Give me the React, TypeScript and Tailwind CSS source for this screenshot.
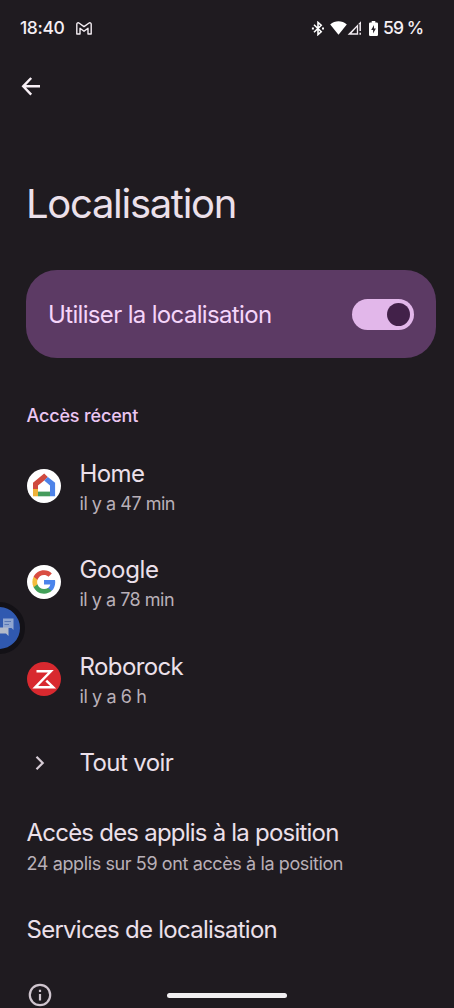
import React from 'react';

interface AppRowProps {
    icon: React.ReactNode;
    name: string;
    nameClass: string;
    time: string;
    timeClass: string;
}

const BackIcon = () => (
    <svg className="h-[20px] w-[20px]" viewBox="0 0 20 20" fill="none" stroke="#f8f0f6" strokeWidth="2.4">
        <path d="M19 10.3H2.5M10.2 2 2.2 10.3l8 8.3" />
    </svg>
);

const GmailIcon = () => (
    <svg className="h-[13px] w-[16px]" viewBox="0 0 16 13" fill="none" stroke="#f3edf2" strokeWidth="1.4" strokeLinejoin="round">
        <path d="M.8 12V2.2C.8.8 2.2.4 3.300 1.200L8 4.600l4.700-3.400c1.100-.8 2.500-.4 2.500 1V12h-3.200V6.300L8 9.200 4 6.300V12z" />
    </svg>
);

const BluetoothIcon = () => (
    <svg className="h-[15px] w-[14px]" viewBox="0 0 14 15" fill="none" stroke="#fff" strokeWidth="1.6">
        <path d="m3 3.8 7.2 7L7 13.6V1.4l3.2 2.8L3 11.2" />
        <path d="M.9 7.5h2M11 7.5h2" strokeWidth="1.8" />
    </svg>
);

const WifiIcon = () => (
    <svg className="h-[14px] w-[17px]" viewBox="0 0 17 14" fill="#fff">
        <path d="M8.5 13.8.2 3.4C5-.7 12-.7 16.8 3.4z" />
    </svg>
);

const SignalIcon = () => (
    <svg className="h-[14px] w-[15px]" viewBox="0 0 15 14" fill="none">
        <path d="M14 .2v3h-2.5v10.5H.6z" fill="#f3edf2" />
        <path d="M4.500 12.200 9.800 6.300v5.900z" fill="#1f1b20" />
        <path d="M11.900 3.200v10.500" stroke="#1f1b20" strokeWidth="1.200" />
        <path d="M13.200 3v7M13.200 11.800v1.900" stroke="#eee7ed" strokeWidth="1.500" />
    </svg>
);

const BatteryIcon = () => (
    <svg className="h-[15px] w-[9px]" viewBox="0 0 9 15">
        <path d="M2.7 0h3.6v1.6h1.5q1.2 0 1.2 1.2v11q0 1.2-1.2 1.2H1.2Q0 15 0 13.8V2.8q0-1.2 1.2-1.2h1.5z" fill="#fff" />
        <path d="M5 4 2.2 8.9h1.9v3.5L6.9 7.5H5z" fill="#29242a" />
    </svg>
);

const HomeIcon = () => (
    <svg className="h-[34px] w-[34px]" viewBox="0 0 34 34">
        <circle cx="17" cy="17" r="17" fill="#fff" />
        <path d="M6 20h5v7.3H6z" fill="#efb23a" />
        <path d="M11 22.6h12v4.7H11z" fill="#459c5c" />
        <path d="m17.2 4.5 3.6 3.4-3.6 3.5-6.2 5V20H6v-6.2z" fill="#cf4a3f" />
        <path d="m20.8 7.9 7.3 5.9v13.5H23V16.4l-5.8-5z" fill="#4e83e8" />
    </svg>
);

const GoogleIcon = () => (
    <svg className="h-[34px] w-[34px]" viewBox="0 0 34 34">
        <circle cx="17" cy="17" r="17" fill="#fff" />
        <g transform="translate(4.3 4.3) scale(1.06)">
            <path fill="#4a84ec" d="M22.56 12.25c0-.78-.07-1.53-.2-2.25H12v4.26h5.92c-.26 1.37-1.04 2.53-2.21 3.31v2.77h3.57c2.08-1.92 3.28-4.74 3.28-8.09z" />
            <path fill="#42a159" d="M12 23c2.97 0 5.46-.98 7.28-2.66l-3.57-2.77c-.98.66-2.23 1.06-3.71 1.06-2.86 0-5.29-1.93-6.16-4.53H2.18v2.84C3.99 20.53 7.7 23 12 23z" />
            <path fill="#f4bd3d" d="M5.84 14.09c-.22-.66-.35-1.36-.35-2.09s.13-1.43.35-2.09V7.07H2.18C1.43 8.55 1 10.22 1 12s.43 3.45 1.18 4.93z" />
            <path fill="#d94d41" d="M12 5.38c1.62 0 3.06.56 4.21 1.64l3.15-3.15C17.45 2.09 14.97 1 12 1 7.7 1 3.99 3.47 2.18 7.07l3.66 2.84c.87-2.6 3.3-4.53 6.16-4.53z" />
        </g>
    </svg>
);

const RoborockIcon = () => (
    <svg className="h-[34px] w-[34px]" viewBox="0 0 34 34" fill="none">
        <circle cx="17" cy="17" r="17" fill="#d8292f" />
        <path d="M9.5 9.3h14.3L8.3 25.2h17.8l-6.8-6.6" stroke="#fff" strokeWidth="2.5" />
    </svg>
);

const ChevronIcon = () => (
    <svg className="h-[16px] w-[10px]" viewBox="0 0 10 16" fill="none" stroke="#d6ccd5" strokeWidth="2.2">
        <path d="m1.5 1.8 6.2 6.2-6.2 6.2" />
    </svg>
);

const InfoIcon = () => (
    <svg className="h-[24px] w-[24px]" viewBox="0 0 24 24" fill="none" stroke="#cfc5ce" strokeWidth="2.2">
        <circle cx="12" cy="12" r="10.2" />
        <path d="M12 11v6.5M12 6.7v2.2" />
    </svg>
);

const ChatBubble = () => (
    <div className="absolute top-[602px] -left-[27px] h-[52px] w-[52px] rounded-full border-[5px] border-[#131116] bg-[#3059b0]">
        <svg className="h-[42px] w-[42px]" viewBox="0 0 42 42">
            <path d="M25 11.5h10.5V23l-2-2H25z" fill="#8fa5d0" />
            <path d="M19 20.5h11.5V29L28 26.5h-9z" fill="#b3bac9" />
            <path d="M26.5 14.5H33M26.5 17.5H31" stroke="#5877b6" strokeWidth="1.2" />
        </svg>
    </div>
);

const AppRow: React.FC<AppRowProps> = ({ icon, name, nameClass, time, timeClass }) => (
    <div className="flex h-[96.5px] items-center">
        <div className="-mt-[5.5px] mr-[18.5px]">{icon}</div>
        <div className="pt-px">
            <div className={`text-2xl leading-[30px] ${nameClass}`}>{name}</div>
            <div className={`text-lg leading-[30.5px] text-[#b9b0b8] ${timeClass}`}>{time}</div>
        </div>
    </div>
);

export default function App() {
    return (
        <div className="relative flex h-[1008px] w-[454px] flex-col overflow-hidden bg-[#1f1b20] font-['Inter',sans-serif] whitespace-nowrap text-[#ece0ea]">
            <header className="flex h-14 items-center pr-[31px] pl-[20px] text-[17.5px] font-medium text-[#f5eff4]">
                <span className="w-[44px] tracking-[-0.4px]">18:40</span>
                <div className="ml-3">
                    <GmailIcon />
                </div>
                <div className="ml-auto flex items-center">
                    <BluetoothIcon />
                    <div className="ml-[5px]">
                        <WifiIcon />
                    </div>
                    <SignalIcon />
                    <div className="mr-[5px] ml-[7px]">
                        <BatteryIcon />
                    </div>
                    <span className="w-10 tracking-[-0.9px]">59 %</span>
                </div>
            </header>

            <div className="flex h-[60px] items-center pl-[21px]">
                <BackIcon />
            </div>

            <h1 className="mt-[63px] pl-[26px] text-[40px] leading-[50px] tracking-[-1.3px]">Localisation</h1>

            <div className="mt-[41px] mr-[18px] ml-[26px] flex h-[88px] shrink-0 items-center justify-between rounded-[31px] bg-[#5c3a64] pr-[22px] pl-[22px]">
                <span className="pt-px text-2xl tracking-[-0.66px] text-[#f5d5fa]">Utiliser la localisation</span>
                <div className="flex h-[31px] w-[62px] items-center justify-end rounded-full bg-[#e2b7ea] pr-1">
                    <div className="h-[23px] w-[23px] rounded-full bg-[#422149]" />
                </div>
            </div>

            <section className="pt-[45.5px] pl-[27px]">
                <h2 className="mb-[12.5px] -ml-[0.5px] text-lg leading-6 font-medium tracking-[-0.15px] text-[#ecc6f2]">Accès récent</h2>
                <AppRow icon={<HomeIcon />} name="Home" nameClass="tracking-[-0.6px]" time="il y a 47 min" timeClass="tracking-[-0.48px]" />
                <AppRow icon={<GoogleIcon />} name="Google" nameClass="tracking-[-0.35px]" time="il y a 78 min" timeClass="tracking-[-0.5px]" />
                <AppRow icon={<RoborockIcon />} name="Roborock" nameClass="tracking-[-0.6px]" time="il y a 6 h" timeClass="tracking-[-0.4px]" />
                <div className="flex h-[67px] items-center">
                    <div className="w-[52.5px] pl-2">
                        <ChevronIcon />
                    </div>
                    <span className="text-2xl tracking-[-0.6px]">Tout voir</span>
                </div>
            </section>

            <section className="mt-[21.5px] pl-[26.5px]">
                <div className="text-2xl leading-[30px] tracking-[-0.78px]">Accès des applis à la position</div>
                <div className="text-lg leading-[31px] tracking-[-0.39px] text-[#b9b0b8]">24 applis sur 59 ont accès à la position</div>
                <div className="mt-[35.5px] text-2xl leading-[30px] tracking-[-0.74px]">Services de localisation</div>
            </section>

            <footer className="mt-[38.5px] flex h-6 shrink-0 items-center pl-[27.5px]">
                <InfoIcon />
                <div className="ml-[115.5px] h-[5px] w-[120px] rounded-full bg-[#f1eff1]" />
            </footer>

            <ChatBubble />
        </div>
    );
}
